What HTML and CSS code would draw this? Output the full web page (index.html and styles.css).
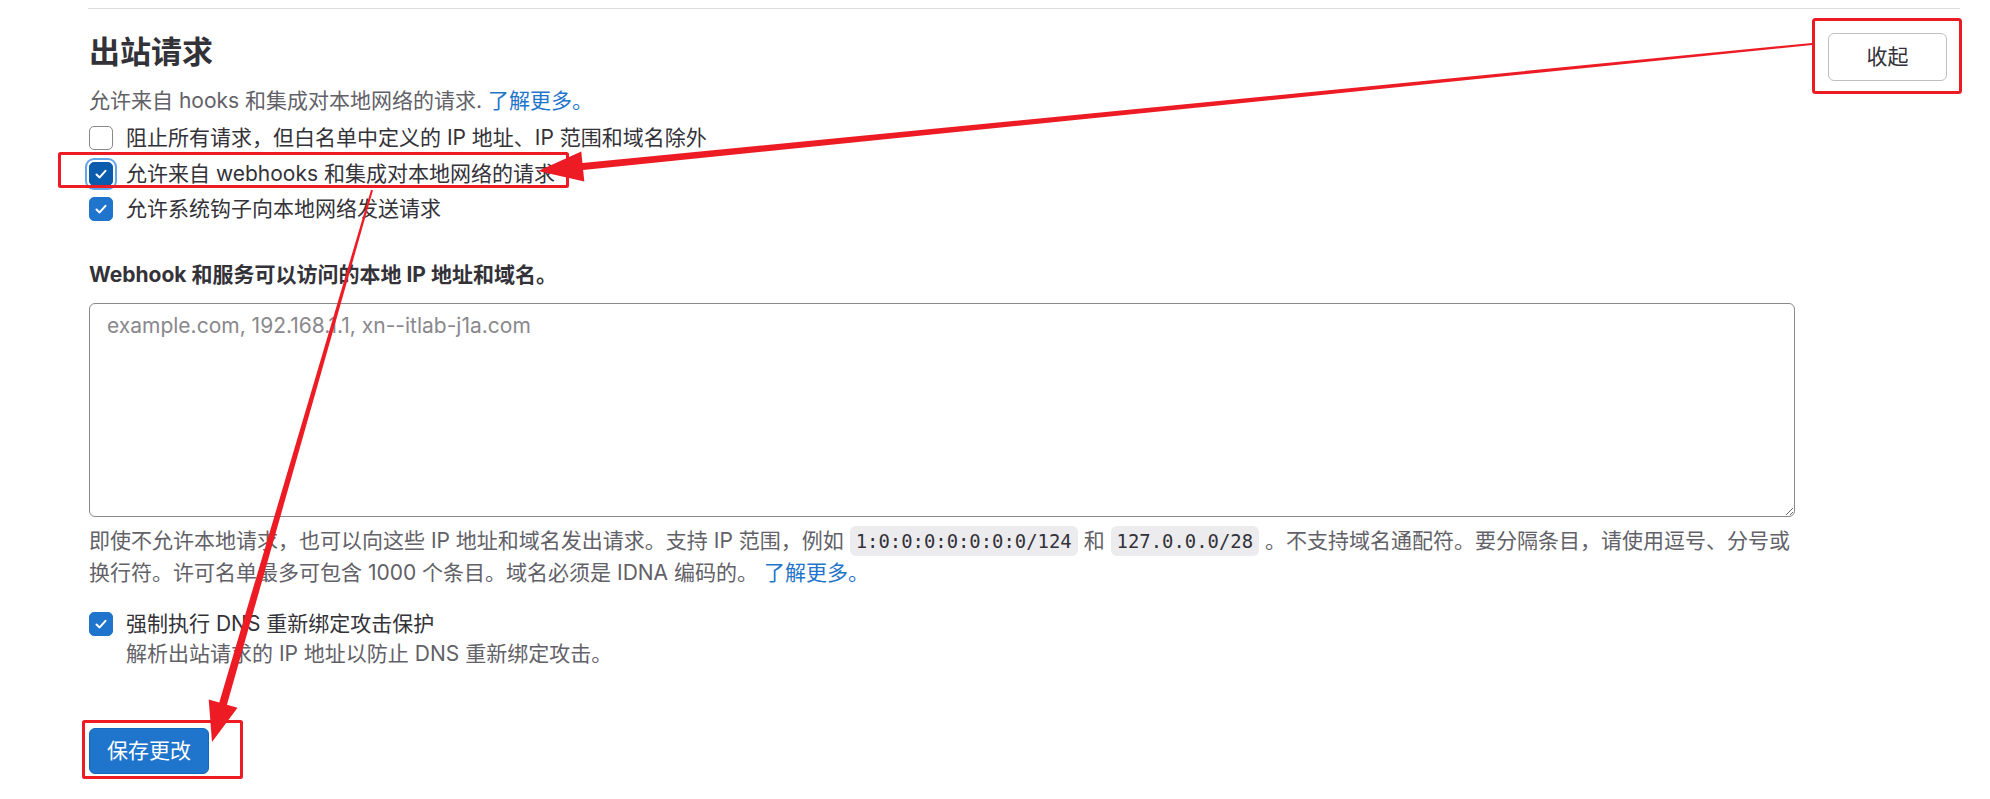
FILE: index.html
```html
<!DOCTYPE html>
<html lang="zh-CN">
<head>
<meta charset="utf-8">
<title>出站请求</title>
<link rel="stylesheet" href="styles.css">
</head>
<body>
<section class="section">
  <div class="header">
    <h4 class="title">出站请求</h4>
    <button class="btn collapse-btn" type="button">收起</button>
  </div>
  <p class="desc">允许来自 hooks 和集成对本地网络的请求. <a class="link" href="#">了解更多。</a></p>

  <div class="check-row">
    <span class="cb"></span>
    <span class="label-text">阻止所有请求，但白名单中定义的 IP 地址、IP 范围和域名除外</span>
  </div>
  <div class="check-row">
    <span class="cb checked focus"><svg viewBox="0 0 16 16" width="16" height="16"><path d="M3.5 8.5 L6.6 11.4 L12.5 4.8" fill="none" stroke="#fff" stroke-width="2" stroke-linecap="round" stroke-linejoin="round"/></svg></span>
    <span class="label-text">允许来自 webhooks 和集成对本地网络的请求</span>
  </div>
  <div class="check-row">
    <span class="cb checked"><svg viewBox="0 0 16 16" width="16" height="16"><path d="M3.5 8.5 L6.6 11.4 L12.5 4.8" fill="none" stroke="#fff" stroke-width="2" stroke-linecap="round" stroke-linejoin="round"/></svg></span>
    <span class="label-text">允许系统钩子向本地网络发送请求</span>
  </div>

  <div class="field-label">Webhook 和服务可以访问的本地 IP 地址和域名。</div>
  <textarea class="textarea" placeholder="example.com, 192.168.1.1, xn--itlab-j1a.com"></textarea>
  <p class="help">即使不允许本地请求，也可以向这些 IP 地址和域名发出请求。支持 IP 范围，例如 <code class="chip">1:0:0:0:0:0:0:0/124</code> 和 <code class="chip">127.0.0.0/28</code> 。不支持域名通配符。要分隔条目，请使用逗号、分号或换行符。许可名单最多可包含 1000 个条目。域名必须是 IDNA 编码的。 <a class="link" href="#">了解更多。</a></p>

  <div class="check-row dns-row">
    <span class="cb checked"><svg viewBox="0 0 16 16" width="16" height="16"><path d="M3.5 8.5 L6.6 11.4 L12.5 4.8" fill="none" stroke="#fff" stroke-width="2" stroke-linecap="round" stroke-linejoin="round"/></svg></span>
    <div class="label-col">
      <div class="label-text">强制执行 DNS 重新绑定攻击保护</div>
      <div class="sub">解析出站请求的 IP 地址以防止 DNS 重新绑定攻击。</div>
    </div>
  </div>

  <button class="btn save-btn" type="button">保存更改</button>
</section>

<svg class="annot" width="1990" height="799" viewBox="0 0 1990 799">
  <g fill="none" stroke="#ed1c24" stroke-width="3">
    <rect x="1813.5" y="19.5" width="147" height="73" rx="2"/>
    <rect x="59.5" y="153.5" width="508" height="33" rx="1"/>
    <rect x="83.5" y="721.5" width="158" height="56" rx="1"/>
  </g>
  <g fill="#ed1c24">
    <polygon points="1811.9,43 582.45,163 581.3,151.6 538,171 584.3,181.4 583.15,170 1812.1,45"/>
    <polygon points="371.04,189.72 219.26,702.49 208.69,699.42 212,742 237.51,707.78 226.94,704.71 372.96,190.28"/>
  </g>
</svg>
</body>
</html>
```

FILE: styles.css
```css
html, body {
  margin: 0;
  padding: 0;
  background: #fff;
}

body {
  position: relative;
  min-height: 799px;
  font-family: Inter, "Noto Sans CJK SC", "Noto Sans", sans-serif;
  font-size: 21px;
  line-height: 30px;
  color: #333238;
  overflow: hidden;
}

.section {
  margin: 8px 30px 0 88px;
  border-top: 1px solid #dcdcde;
  padding: 24px 13px 0 1px;
}

.header {
  display: flex;
  justify-content: space-between;
  align-items: flex-start;
}

.title {
  margin: 1px 0 0;
  font-size: 31px;
  line-height: 36px;
  font-weight: 700;
  color: #333238;
}

.btn {
  font-family: inherit;
  font-size: 21px;
  line-height: 30px;
  border-radius: 6px;
  cursor: pointer;
  padding: 0;
}

.collapse-btn {
  width: 119px;
  height: 48px;
  background: #fff;
  border: 1px solid #bfbfc3;
  color: #333238;
}

.desc {
  margin: 5px 0 7px;
  color: #626168;
}

.link {
  color: #1f75cb;
  text-decoration: none;
}

.check-row {
  display: flex;
  gap: 13px;
  margin-bottom: 5.5px;
}

.cb {
  flex: none;
  box-sizing: border-box;
  width: 24px;
  height: 24px;
  margin-top: 3px;
  border: 1px solid #89888d;
  border-radius: 5px;
  background: #fff;
  display: flex;
  align-items: center;
  justify-content: center;
}

.cb.checked {
  background: #1f75cb;
  border-color: #1f75cb;
}

.cb.focus {
  background: #0b5cad;
  border-color: #0b5cad;
  box-shadow: 0 0 0 2px #fff, 0 0 0 4px #63a6e9;
}

.field-label {
  margin-top: 36px;
  margin-bottom: 13px;
  font-weight: 700;
}

.textarea {
  display: block;
  box-sizing: border-box;
  width: 1706px;
  height: 214px;
  margin: 0;
  padding: 7px 17px;
  border: 1px solid #89888d;
  border-radius: 6px;
  font-family: inherit;
  font-size: 21px;
  line-height: 30px;
  color: #333238;
  background: #fff;
}

.textarea::placeholder {
  color: #89888d;
}

.help {
  width: 1706px;
  margin: 8px 0 0;
  line-height: 32px;
  color: #626168;
}

.chip {
  font-family: "DejaVu Sans Mono", "Liberation Mono", monospace;
  font-size: 18.9px;
  padding: 4px 6px;
  border-radius: 6px;
  background: #ececef;
  color: #333238;
}

.dns-row {
  margin-top: 20px;
}

.sub {
  color: #626168;
}

.save-btn {
  display: block;
  margin-top: 59px;
  width: 120px;
  height: 46px;
  background: #1f75cb;
  border: 1px solid #1068bf;
  color: #fff;
}

.annot {
  position: absolute;
  top: 0;
  left: 0;
  pointer-events: none;
}
```
